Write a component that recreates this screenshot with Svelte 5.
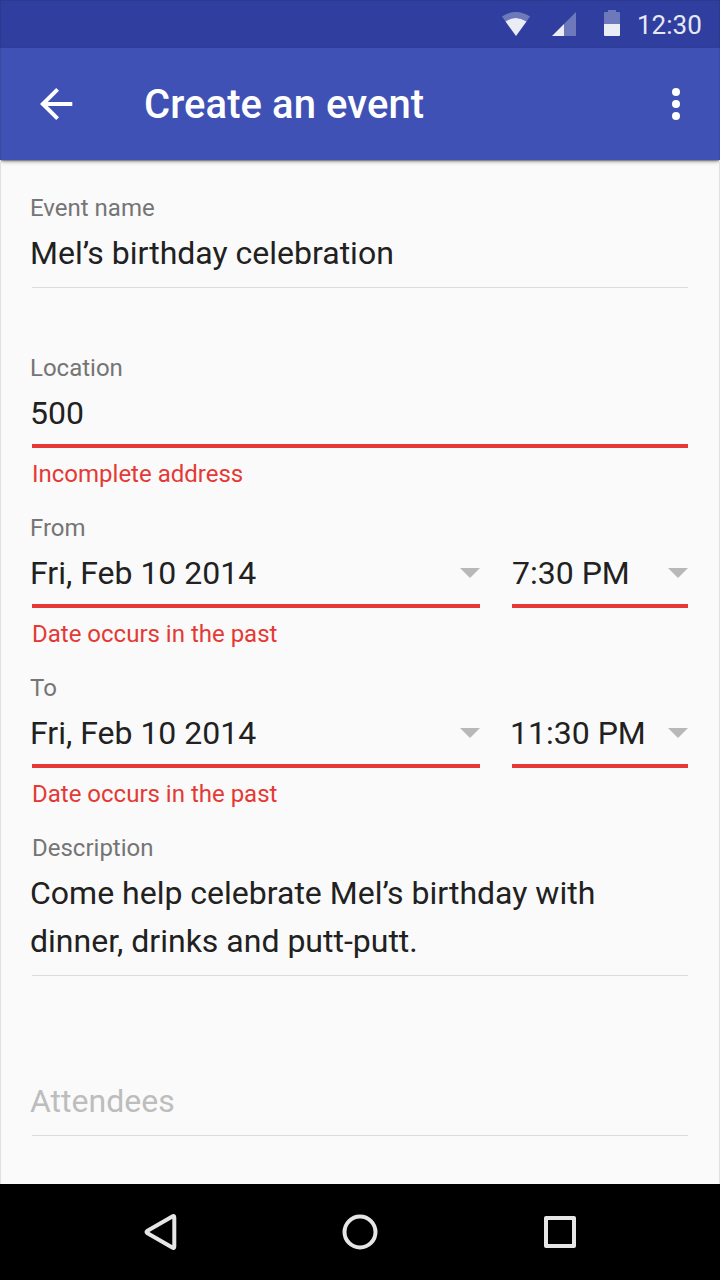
<script>
  const rows = [
    { label: 'From', time: '7:30 PM', shift: true },
    { label: 'To', time: '11:30 PM', shift: false }
  ];
</script>

<div class="screen">
  <div class="status">
    <svg width="104" height="48" viewBox="0 0 104 48">
      <path d="M2 16.5Q16 7.5 30 16.5L26.5 21.5Q16 14.5 5.5 21.5Z" fill="#fff" opacity=".3" />
      <path d="M5.5 21.5Q16 14.5 26.5 21.5L16 36Z" fill="#fff" opacity=".9" />
      <path d="M64 24L76 12V36H64Z" fill="#fff" opacity=".3" />
      <path d="M52 36H64V24Z" fill="#fff" opacity=".9" />
    </svg>
    <svg class="battery" width="16" height="48" viewBox="0 0 16 48">
      <path d="M0 13Q0 12 1 12H4V10H12V12H15Q16 12 16 13V24H0Z" fill="#fff" opacity=".3" />
      <path d="M0 24H16V35Q16 36 15 36H1Q0 36 0 35Z" fill="#fff" opacity=".9" />
    </svg>
    <span>12:30</span>
  </div>
  <header>
    <svg class="back" width="34" height="34" viewBox="0 0 34 34"><path fill="none" stroke="#fff" stroke-width="4" d="M17.6 2.4L2.8 17L17.6 31.6M3 17H32.3" /></svg>
    <h1>Create an event</h1>
    <svg class="more" width="8" height="32" viewBox="0 0 8 32"><g fill="#fff"><circle cx="4" cy="4" r="4" /><circle cx="4" cy="16" r="4" /><circle cx="4" cy="28" r="4" /></g></svg>
  </header>
  <main>
    <section>
      <div class="label">Event name</div>
      <div class="value line">Mel’s birthday celebration</div>
    </section>
    <section>
      <div class="label">Location</div>
      <div class="value line bad">500</div>
      <div class="error">Incomplete address</div>
    </section>
    {#each rows as row}
      <section>
        <div class="label">{row.label}</div>
        <div class="pair">
          <div class="value line bad pick">Fri, Feb 10 2014<i></i></div>
          <div class="value line bad pick" class:shift={row.shift}>{row.time}<i></i></div>
        </div>
        <div class="error">Date occurs in the past</div>
      </section>
    {/each}
    <section class="description">
      <div class="label">Description</div>
      <div class="value line"><p>Come help celebrate Mel’s birthday with<br />dinner, drinks and putt-putt.</p></div>
    </section>
    <section class="attendees">
      <div class="value line">Attendees</div>
    </section>
  </main>
  <nav>
    <svg width="36" height="40" viewBox="0 0 36 40"><path d="M4.8 19.1L30 4.5Q32 3.3 32 5.5V34.5Q32 36.7 30 35.5L4.8 20.9Q3.6 20 4.8 19.1Z" transform="translate(.3 0)" /></svg>
    <svg width="36" height="40" viewBox="0 0 36 40"><circle cx="18" cy="20" r="15.5" /></svg>
    <svg width="36" height="40" viewBox="0 0 36 40"><rect x="4" y="6" width="28" height="28" /></svg>
  </nav>
</div>

<style>
  :global(body) { margin: 0; }
  .screen { width: 720px; height: 1280px; box-sizing: border-box; display: flex; flex-direction: column; background: #fafafa; font-family: Roboto, sans-serif; color: #212121; overflow: hidden; }
  .status { height: 48px; background: #303f9f; display: flex; justify-content: flex-end; align-items: center; padding-right: 17px; color: #e6e8f4; font-size: 26px; flex: none; border: solid #2b398f; border-width: 1px 1px 0; box-sizing: border-box; }
  .status svg { display: block; margin-top: -1px; }
  .status .battery { margin-right: 17px; }
  .status span { width: 65px; white-space: nowrap; line-height: 48px; }
  header { height: 112px; background: #3f51b5; display: flex; align-items: center; padding: 0 39px; box-shadow: 0 2px 4px -1px rgba(0,0,0,.55), 0 1px 1px rgba(0,0,0,.2); color: #fff; flex: none; box-sizing: border-box; border: solid #394aa5; border-width: 0 1px; }
  h1 { margin: 0 auto 0 70px; font-size: 40px; font-weight: 500; line-height: 48px; letter-spacing: .07px; padding-top: 2px; }
  main { flex: 1; min-height: 0; padding: 32px 31px 0; border: solid #e1e1e1; border-width: 0 1px; box-sizing: border-box; }
  section { height: 160px; }
  .label { height: 32px; line-height: 32px; font-size: 24px; color: #757575; margin-left: -2px; }
  .value { height: 64px; line-height: 58px; font-size: 32px; box-sizing: border-box; text-indent: -2px; white-space: nowrap; }
  .line { border-bottom: 1px solid #dcdcdc; }
  .bad { border-bottom: 4px solid #e53935; }
  .error { color: #e53935; font-size: 24px; line-height: 32px; margin-top: 10px; }
  .pair { display: grid; grid-template-columns: 448px 176px; gap: 32px; }
  .pick { display: flex; justify-content: space-between; align-items: flex-start; }
  .shift { text-indent: 0; }
  .pick i { border: 10px solid transparent; border-top-color: #b8b8b8; border-bottom: 0; margin-top: 24px; }
  .description { height: 224px; }
  .description .label { margin-left: 0; }
  .description .value { height: 112px; line-height: 48px; padding-top: 5px; text-indent: 0; }
  p { margin: 0 0 0 -2px; }
  .attendees { padding-top: 16px; }
  .attendees .value { color: #bdbdbd; }
  nav { height: 96px; background: #000; display: flex; justify-content: center; align-items: center; gap: 164px; flex: none; }
  nav svg { fill: none; stroke: #e6e6e6; stroke-width: 4; stroke-linejoin: round; }
</style>
